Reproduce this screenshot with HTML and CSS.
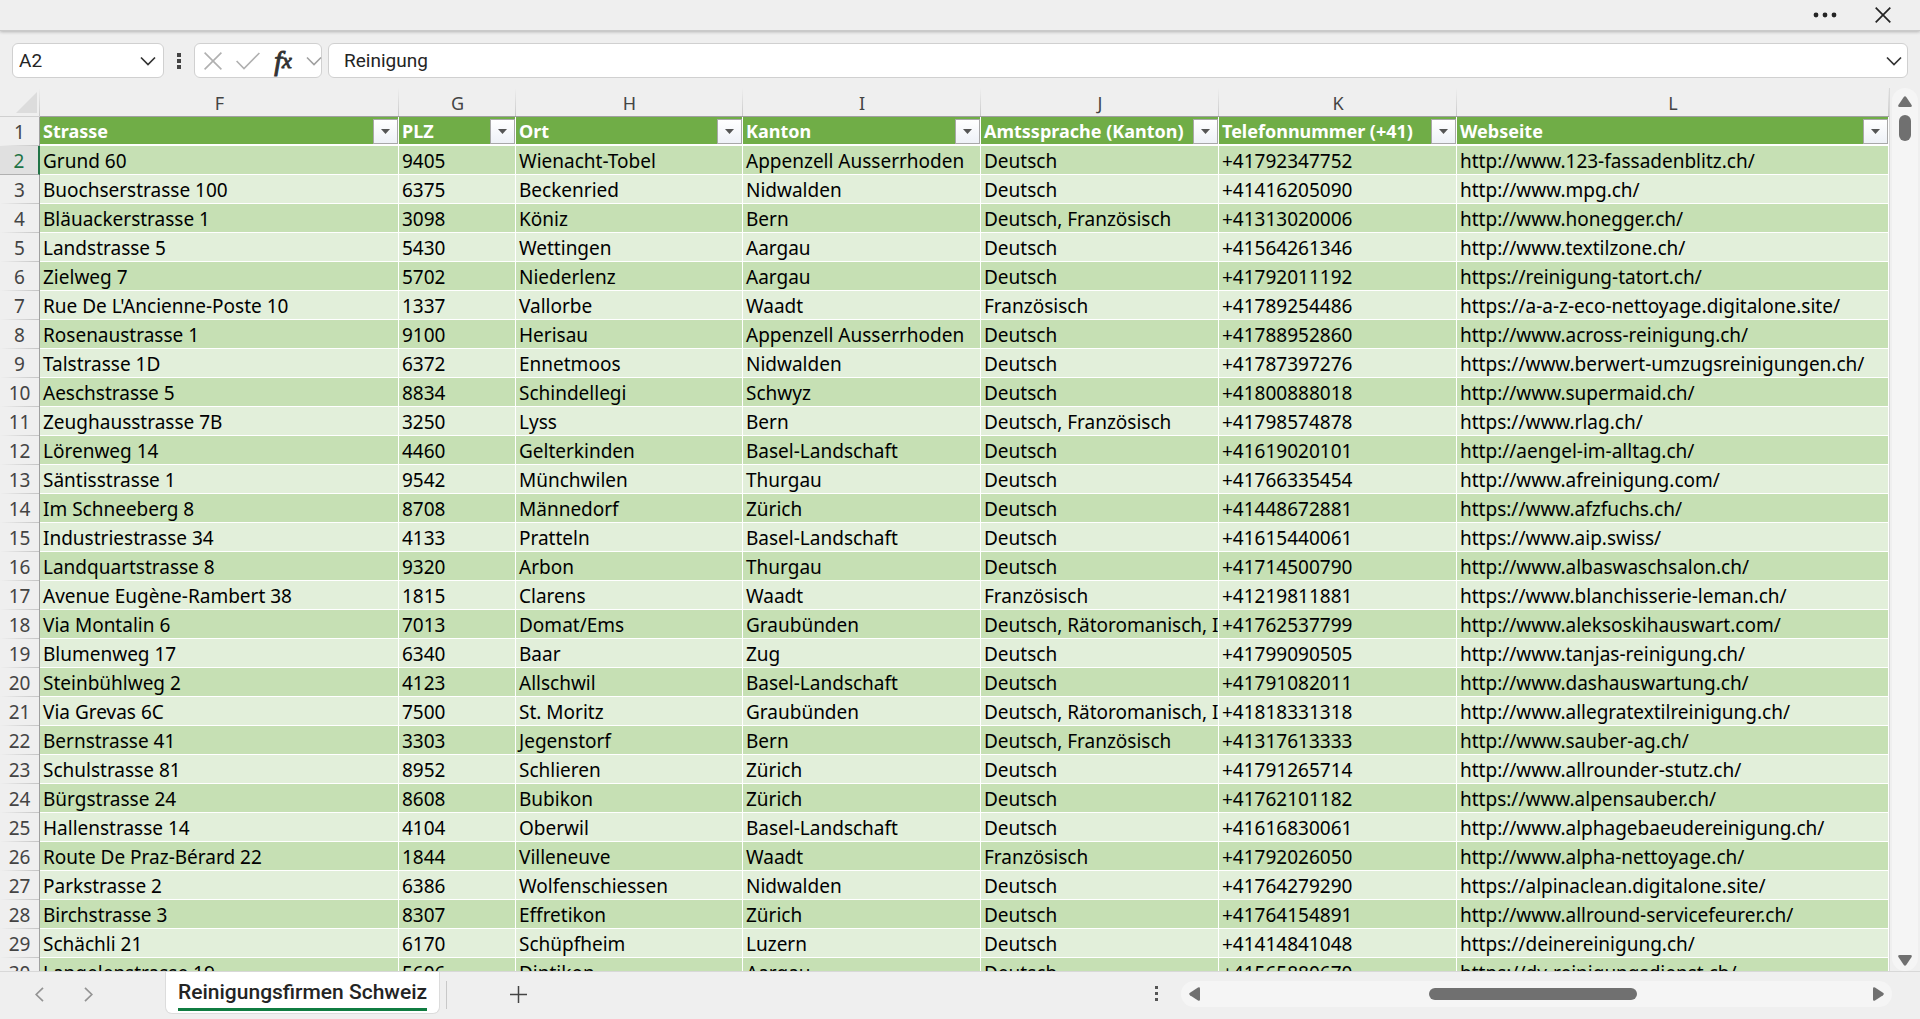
FILE: index.html
```html
<!DOCTYPE html>
<html lang="de">
<head>
<meta charset="utf-8">
<title>Reinigungsfirmen Schweiz</title>
<link rel="stylesheet" href="styles.css">
</head>
<body>
<div class="app">
  <header class="titlebar">
    <button class="icon-btn" type="button" aria-label="Mehr Optionen">
      <svg width="24" height="6" viewBox="0 0 24 6" fill="#242424"><circle cx="3" cy="3" r="2.4"/><circle cx="12" cy="3" r="2.4"/><circle cx="21" cy="3" r="2.4"/></svg>
    </button>
    <button class="icon-btn" type="button" aria-label="Schliessen">
      <svg width="16" height="16" viewBox="0 0 16 16" fill="none" stroke="#242424" stroke-width="1.7"><path d="M.7.7l14.600 14.600M15.300.7L.7 15.300"/></svg>
    </button>
  </header>

  <div class="formula-bar">
    <div class="field name-box">
      <input class="text-input" type="text" value="A2" aria-label="Namenfeld">
      <button class="icon-btn" type="button" aria-label="Namen anzeigen">
        <svg width="16" height="10" viewBox="0 0 16 10" fill="none" stroke="#333" stroke-width="1.7"><path d="M1 1.500l7 7 7-7"/></svg>
      </button>
    </div>
    <svg class="grip" width="4" height="16" viewBox="0 0 4 16" fill="#444"><path d="M0 0h4v4H0zM0 6h4v4H0zM0 12h4v4H0z"/></svg>
    <div class="field fx-box">
      <button class="icon-btn" type="button" aria-label="Abbrechen">
        <svg width="18" height="18" viewBox="0 0 18 18" fill="none" stroke="#b0b0b0" stroke-width="1.600"><path d="M.6.6l16.800 16.800M17.400.6L.6 17.400"/></svg>
      </button>
      <button class="icon-btn" type="button" aria-label="Eingeben">
        <svg width="24" height="18" viewBox="0 0 24 18" fill="none" stroke="#b0b0b0" stroke-width="1.600"><path d="M.6 9l7.400 7.500L23.400 1"/></svg>
      </button>
      <button class="icon-btn fx" type="button" aria-label="Funktion einfügen"><i>f</i><i class="fx-x">x</i></button>
      <button class="icon-btn" type="button" aria-label="Funktionsliste">
        <svg width="16" height="10" viewBox="0 0 16 10" fill="none" stroke="#a0a0a0" stroke-width="1.600"><path d="M1 1.500l7 7 7-7"/></svg>
      </button>
    </div>
    <div class="field formula-box">
      <input class="text-input" type="text" value="Reinigung" aria-label="Bearbeitungsleiste">
      <button class="icon-btn" type="button" aria-label="Bearbeitungsleiste erweitern">
        <svg width="16" height="10" viewBox="0 0 16 10" fill="none" stroke="#333" stroke-width="1.700"><path d="M1 1.500l7 7 7-7"/></svg>
      </button>
    </div>
  </div>

  <main class="workspace">
    <div class="grid-pane">
      <table class="sheet">
        <colgroup><col class="c-row"><col class="c-f"><col class="c-g"><col class="c-h"><col class="c-wide"><col class="c-wide"><col class="c-wide"><col></colgroup>
        <thead>
          <tr class="letters"><th class="corner"><svg width="21" height="21" viewBox="0 0 21 21" fill="#dcdcdc"><path d="M21 0v21H0z"/></svg></th><th>F</th><th>G</th><th>H</th><th>I</th><th>J</th><th>K</th><th>L</th></tr>
        </thead>
        <tbody id="rows"></tbody>
      </table>
    </div>
    <div class="vscroll">
      <svg width="14" height="11" viewBox="0 0 14 11" fill="#707070"><path d="M5.800 1Q7-.6 8.200 1l5.400 8q.8 2-1.200 2H1.600Q-.4 11 .4 9z"/></svg>
      <div class="vthumb"></div>
      <svg class="end" width="14" height="11" viewBox="0 0 14 11" fill="#707070"><path d="M5.800 10Q7 11.600 8.200 10l5.400-8q.8-2-1.200-2H1.600Q-.4 0 .4 2z"/></svg>
    </div>
  </main>

  <footer class="tabbar">
    <div class="tab-side">
      <button class="icon-btn nav" type="button" aria-label="Vorheriges Blatt"><svg width="9" height="15" viewBox="0 0 9 15" fill="none" stroke="#949494" stroke-width="1.700"><path d="M8 .8L1.200 7.500 8 14.200"/></svg></button>
      <button class="icon-btn nav" type="button" aria-label="Nächstes Blatt"><svg width="9" height="15" viewBox="0 0 9 15" fill="none" stroke="#949494" stroke-width="1.700"><path d="M1 .8l6.800 6.700L1 14.200"/></svg></button>
      <button class="tab" type="button"><span class="tab-name">Reinigungsfirmen Schweiz</span></button>
      <span class="divider"></span>
      <button class="icon-btn add" type="button" aria-label="Neues Blatt"><svg width="17" height="17" viewBox="0 0 17 17" stroke="#444" stroke-width="1.500"><path d="M8.500 0v17M0 8.500h17"/></svg></button>
    </div>
    <div class="scroll-side">
      <svg width="4" height="16" viewBox="0 0 4 16" fill="#555"><path d="M0 0h3v3H0zM0 6h3v3H0zM0 12h3v3H0z"/></svg>
      <div class="hscroll">
        <svg width="11" height="14" viewBox="0 0 11 14" fill="#707070"><path d="M1 5.800Q-.6 7 1 8.200l8 5.400q2 .8 2-1.200V1.600Q11-.4 9 .4z"/></svg>
        <div class="htrack"><div class="hthumb"></div></div>
        <svg width="11" height="14" viewBox="0 0 11 14" fill="#707070"><path d="M10 5.800Q11.600 7 10 8.200l-8 5.400q-2 .8-2-1.200V1.600Q0-.4 2 .4z"/></svg>
      </div>
    </div>
  </footer>
</div>
<script src="sheet.js"></script>
</body>
</html>
```
FILE: styles.css
```css
* { box-sizing: border-box; }
body { margin: 0; font-family: Roboto, "Open Sans", sans-serif; color: #242424; }
button, input { font: inherit; color: inherit; margin: 0; padding: 0; border: 0; background: none; }
svg { display: block; flex: none; }

.app { display: flex; flex-direction: column; height: 100vh; background: #efefef; }
.icon-btn { display: flex; align-items: center; justify-content: center; flex: none; }

.titlebar { display: flex; justify-content: flex-end; align-items: center; gap: 38px; height: 31px; padding-right: 29px; border-bottom: 1px solid #cacaca; box-shadow: 0 1px 3px #b4b4b4; flex: none; }

.formula-bar { display: flex; align-items: center; height: 57px; padding: 2px 12px 0; flex: none; }
.field { display: flex; align-items: center; height: 35px; background: #fff; border: 1px solid #d0d0d0; border-radius: 6px; }
.text-input { flex: 1; min-width: 0; height: 100%; font-size: 19px; outline: 0; }
.name-box { width: 152px; padding: 0 7px 0 6px; }
.grip { margin: 0 13px; }
.fx-box { width: 128px; padding: 0 2px 0 9px; gap: 14px; }
.fx { width: 18px; font: italic 28px/30px "Liberation Serif", serif; color: #333; -webkit-text-stroke: 1px #333; }
.fx-x { font-size: 22px; }
.fx-box .icon-btn:last-child { margin-left: auto; }
.formula-box { flex: 1; margin-left: 6px; padding: 0 5px 0 15px; }

.workspace { display: flex; flex: 1; min-height: 0; }
.grid-pane { flex: 1; min-width: 0; overflow: hidden; border-right: 1px solid #d8d8d8; }

.sheet { width: 100%; table-layout: fixed; border-collapse: separate; border-spacing: 0; font: 19px/26px "Noto Sans", sans-serif; color: #000; }
.c-row { width: 40px; }
.c-f { width: 359px; }
.c-g { width: 117px; }
.c-h { width: 227px; }
.c-wide { width: 238px; }
.sheet td, .sheet th { height: 29px; padding: 1px 0 0 3px; text-align: left; white-space: nowrap; overflow: hidden; border-right: 1px solid #fff; border-bottom: 1px solid #fff; }
.sheet .letters th { padding: 2px 0 0; font-size: 18px; text-align: center; font-weight: 400; color: #444; border-right: 0; border-bottom: 1px solid #a0a0a0; background: linear-gradient(#efefef, #c8c8c8) right / 1px 100% no-repeat; }
.sheet .letters .corner { padding: 4px 3px 3px 16px; border-bottom-color: #d0d0d0; }
.sheet .num { padding: 1px 0 0; text-align: center; font-weight: 400; color: #444; border-right: 1px solid #a0a0a0; border-bottom: 0; background: linear-gradient(90deg, #efefef, #c4c4c4) bottom / 100% 1px no-repeat; }
.sheet .num.active { color: #217346; background: #e0e0e0; border-right: 2px solid #217346; border-bottom: 1px solid #b0b0b0; }
.band td { background: #c6e0b4; }
.plain td { background: #e2efda; }
.sheet .head td { padding: 0; font-size: 18px; font-weight: 700; color: #fff; background: #70ad47; border-bottom: 2px solid #fff; }
.head-cell { display: flex; align-items: center; justify-content: space-between; height: 27px; padding-left: 3px; }
.filter { display: flex; align-items: center; justify-content: center; flex: none; width: 25px; height: 25px; margin-top: 2px; border: 1px solid #a8a8a8; background: linear-gradient(#fff, #eef1f7); }

.vscroll { display: flex; flex-direction: column; align-items: center; gap: 8px; width: 26px; margin: 0 2px 0 2px; padding: 8px 0 5px; border-radius: 13px; background: #f5f5f5; }
.vthumb { width: 12px; height: 26px; border-radius: 6px; background: #707070; }
.end { margin-top: auto; }

.tabbar { display: flex; justify-content: space-between; height: 48px; border-top: 1px solid #d8d8d8; flex: none; }
.tab-side { display: flex; align-items: flex-start; }
.nav { width: 49px; height: 44px; }
.nav:first-child { margin-left: 15px; }
.tab { height: 42px; margin-left: 52px; padding: 0 12px; background: #fff; border: 1px solid #dcdcdc; border-top: 0; border-radius: 0 0 7px 7px; }
.tab-name { display: block; height: 37px; font: 500 21px/36px Roboto, sans-serif; border-bottom: 3px solid #107c41; }
.divider { width: 1px; height: 28px; margin: 9px 0 0 6px; background: #c8c8c8; }
.add { width: 43px; height: 44px; margin-left: 50px; }
.scroll-side { display: flex; align-items: center; gap: 22px; width: 765px; padding: 0 28px 3px 0; }
.hscroll { display: flex; align-items: center; flex: 1; height: 26px; padding: 0 8px; border-radius: 13px; background: #f5f5f5; }
.htrack { flex: 1; }
.hthumb { width: 208px; height: 12px; margin-left: 34%; border-radius: 6px; background: #707070; }
```
FILE: sheet.js
```js
const header = ["Strasse", "PLZ", "Ort", "Kanton", "Amtssprache (Kanton)", "Telefonnummer (+41)", "Webseite"];
const data = `Grund 60|9405|Wienacht-Tobel|Appenzell Ausserrhoden|Deutsch|+41792347752|http://www.123-fassadenblitz.ch/
Buochserstrasse 100|6375|Beckenried|Nidwalden|Deutsch|+41416205090|http://www.mpg.ch/
Bläuackerstrasse 1|3098|Köniz|Bern|Deutsch, Französisch|+41313020006|http://www.honegger.ch/
Landstrasse 5|5430|Wettingen|Aargau|Deutsch|+41564261346|http://www.textilzone.ch/
Zielweg 7|5702|Niederlenz|Aargau|Deutsch|+41792011192|https://reinigung-tatort.ch/
Rue De L'Ancienne-Poste 10|1337|Vallorbe|Waadt|Französisch|+41789254486|https://a-a-z-eco-nettoyage.digitalone.site/
Rosenaustrasse 1|9100|Herisau|Appenzell Ausserrhoden|Deutsch|+41788952860|http://www.across-reinigung.ch/
Talstrasse 1D|6372|Ennetmoos|Nidwalden|Deutsch|+41787397276|https://www.berwert-umzugsreinigungen.ch/
Aeschstrasse 5|8834|Schindellegi|Schwyz|Deutsch|+41800888018|http://www.supermaid.ch/
Zeughausstrasse 7B|3250|Lyss|Bern|Deutsch, Französisch|+41798574878|https://www.rlag.ch/
Lörenweg 14|4460|Gelterkinden|Basel-Landschaft|Deutsch|+41619020101|http://aengel-im-alltag.ch/
Säntisstrasse 1|9542|Münchwilen|Thurgau|Deutsch|+41766335454|http://www.afreinigung.com/
Im Schneeberg 8|8708|Männedorf|Zürich|Deutsch|+41448672881|https://www.afzfuchs.ch/
Industriestrasse 34|4133|Pratteln|Basel-Landschaft|Deutsch|+41615440061|https://www.aip.swiss/
Landquartstrasse 8|9320|Arbon|Thurgau|Deutsch|+41714500790|http://www.albaswaschsalon.ch/
Avenue Eugène-Rambert 38|1815|Clarens|Waadt|Französisch|+41219811881|https://www.blanchisserie-leman.ch/
Via Montalin 6|7013|Domat/Ems|Graubünden|Deutsch, Rätoromanisch, Italienisch|+41762537799|http://www.aleksoskihauswart.com/
Blumenweg 17|6340|Baar|Zug|Deutsch|+41799090505|http://www.tanjas-reinigung.ch/
Steinbühlweg 2|4123|Allschwil|Basel-Landschaft|Deutsch|+41791082011|http://www.dashauswartung.ch/
Via Grevas 6C|7500|St. Moritz|Graubünden|Deutsch, Rätoromanisch, Italienisch|+41818331318|http://www.allegratextilreinigung.ch/
Bernstrasse 41|3303|Jegenstorf|Bern|Deutsch, Französisch|+41317613333|http://www.sauber-ag.ch/
Schulstrasse 81|8952|Schlieren|Zürich|Deutsch|+41791265714|http://www.allrounder-stutz.ch/
Bürgstrasse 24|8608|Bubikon|Zürich|Deutsch|+41762101182|https://www.alpensauber.ch/
Hallenstrasse 14|4104|Oberwil|Basel-Landschaft|Deutsch|+41616830061|http://www.alphagebaeudereinigung.ch/
Route De Praz-Bérard 22|1844|Villeneuve|Waadt|Französisch|+41792026050|http://www.alpha-nettoyage.ch/
Parkstrasse 2|6386|Wolfenschiessen|Nidwalden|Deutsch|+41764279290|https://alpinaclean.digitalone.site/
Birchstrasse 3|8307|Effretikon|Zürich|Deutsch|+41764154891|http://www.allround-servicefeurer.ch/
Schächli 21|6170|Schüpfheim|Luzern|Deutsch|+41414841048|https://deinereinigung.ch/
Langelenstrasse 19|5606|Dintikon|Aargau|Deutsch|+41565880670|https://dy-reinigungsdienst.ch/`;

const arrow = '<svg width="9" height="5" viewBox="0 0 9 5" fill="#555"><path d="M0 0h9L4.500 5z"/></svg>';
const headRow = '<tr class="head"><th class="num">1</th>' + header.map(name =>
  `<td><div class="head-cell">${name}<button class="filter" type="button" aria-label="${name} filtern">${arrow}</button></div></td>`).join("") + "</tr>";
const bodyRows = data.split("\n").map((line, i) =>
  `<tr class="${i % 2 ? "plain" : "band"}"><th class="num${i ? "" : " active"}">${i + 2}</th>` +
  line.split("|").map(value => `<td>${value}</td>`).join("") + "</tr>").join("");
document.getElementById("rows").innerHTML = headRow + bodyRows;
```
